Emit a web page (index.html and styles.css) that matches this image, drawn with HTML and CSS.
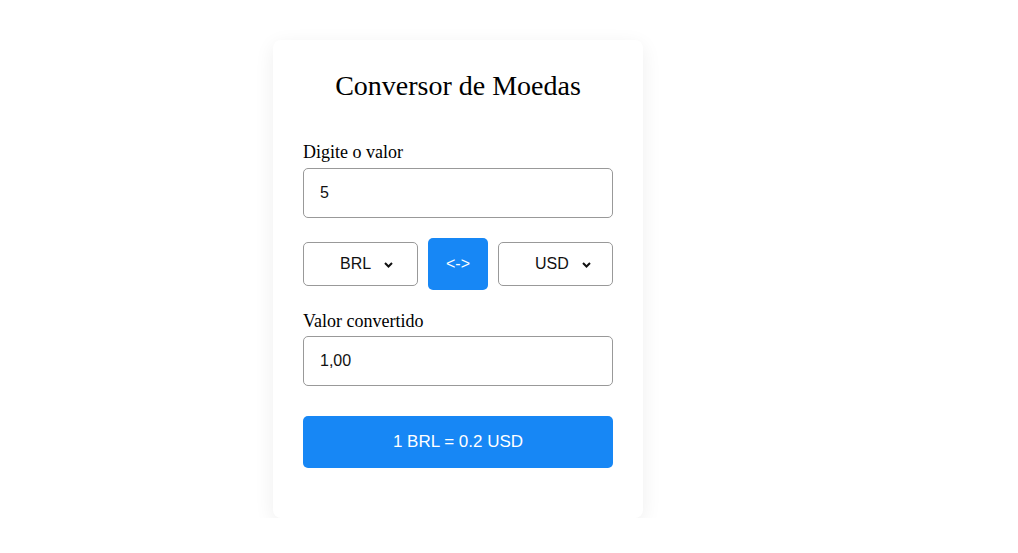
FILE: index.html
```html
<!DOCTYPE html>
<html lang="pt-BR">
<head>
<meta charset="utf-8">
<title>Conversor de Moedas</title>
<link rel="stylesheet" href="styles.css">
</head>
<body>
<div class="page">
  <div class="card">
    <h1 class="title">Conversor de Moedas</h1>
    <label class="label" for="valor">Digite o valor</label>
    <input class="field" id="valor" type="text" value="5">
    <div class="currency-row">
      <div class="select">
        <span>BRL</span>
        <svg class="chev" width="9" height="6" viewBox="0 0 9 6"><path d="M1 1l3.5 3.5L8 1" fill="none" stroke="#111" stroke-width="2"/></svg>
      </div>
      <button class="swap" type="button">&lt;-&gt;</button>
      <div class="select">
        <span>USD</span>
        <svg class="chev" width="9" height="6" viewBox="0 0 9 6"><path d="M1 1l3.5 3.5L8 1" fill="none" stroke="#111" stroke-width="2"/></svg>
      </div>
    </div>
    <label class="label label-second" for="convertido">Valor convertido</label>
    <input class="field" id="convertido" type="text" value="1,00">
    <div class="rate">1 BRL = 0.2 USD</div>
  </div>
</div>
</body>
</html>
```

FILE: styles.css
```css
* { box-sizing: border-box; }
html, body { margin: 0; background: #fff; }
body { font-family: "Liberation Serif", "Times New Roman", serif; color: #000; }

.page {
  padding: 40px 0 0 273px;
}

.card {
  width: 370px;
  padding: 30px 30px 50px;
  background: #fff;
  border-radius: 8px;
  box-shadow: 0 5px 20px rgba(0, 0, 0, 0.07);
}

.title {
  margin: 0 0 41px;
  font-size: 28px;
  font-weight: normal;
  line-height: 31px;
  text-align: center;
}

.label {
  display: block;
  font-size: 18px;
  line-height: 20px;
  margin-bottom: 6px;
}

.label-second { margin-top: 21px; margin-bottom: 5px; }

.field {
  display: block;
  width: 100%;
  height: 50px;
  padding: 0 16px;
  border: 1px solid #999;
  border-radius: 5px;
  font-family: "Liberation Sans", Arial, sans-serif;
  font-size: 16px;
  color: #111;
  background: #fff;
  outline: none;
}

.currency-row {
  display: flex;
  align-items: center;
  gap: 10px;
  margin-top: 20px;
}

.select {
  flex: 1;
  height: 44px;
  display: flex;
  align-items: center;
  gap: 13px;
  padding-left: 36px;
  border: 1px solid #999;
  border-radius: 5px;
  font-family: "Liberation Sans", Arial, sans-serif;
  font-size: 16px;
  color: #111;
}

.chev { display: block; margin-top: 1px; }

.swap {
  width: 60px;
  height: 52px;
  border: none;
  border-radius: 5px;
  background: #1787f5;
  color: #fff;
  font-family: "Liberation Sans", Arial, sans-serif;
  font-size: 16px;
  padding: 0;
}

.rate {
  margin-top: 30px;
  height: 52px;
  display: flex;
  align-items: center;
  justify-content: center;
  background: #1787f5;
  color: #fff;
  border-radius: 5px;
  font-family: "Liberation Sans", Arial, sans-serif;
  font-size: 17px;
}
```
